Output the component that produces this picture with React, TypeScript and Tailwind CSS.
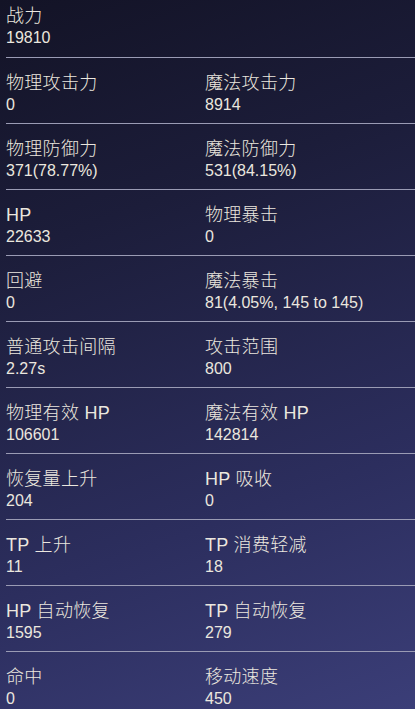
const stats: [string, string][][] = [
  [["物理攻击力", "0"], ["魔法攻击力", "8914"]],
  [["物理防御力", "371(78.77%)"], ["魔法防御力", "531(84.15%)"]],
  [["HP", "22633"], ["物理暴击", "0"]],
  [["回避", "0"], ["魔法暴击", "81(4.05%, 145 to 145)"]],
  [["普通攻击间隔", "2.27s"], ["攻击范围", "800"]],
  [["物理有效 HP", "106601"], ["魔法有效 HP", "142814"]],
  [["恢复量上升", "204"], ["HP 吸收", "0"]],
  [["TP 上升", "11"], ["TP 消费轻减", "18"]],
  [["HP 自动恢复", "1595"], ["TP 自动恢复", "279"]],
  [["命中", "0"], ["移动速度", "450"]],
];

function Stat({ label, value }: { label: string; value: string }) {
  return (
    <div>
      <div className="text-[18px] leading-[24px] font-light tracking-[0.3px]">{label}</div>
      <div className="text-[16px] leading-[20px]">{value}</div>
    </div>
  );
}

export default function App() {
  return (
    <div
      className="w-[415px] h-[709px] overflow-hidden bg-[linear-gradient(160deg,#131326_0%,#1c1d3a_30%,#2c2e5e_70%,#3b3e78_100%)] pl-[6px] text-[#ebe7df]"
      style={{ fontFamily: '"Liberation Sans", "Noto Sans CJK SC", sans-serif' }}
    >
      <div className="pt-[4px] pb-[9px] border-b border-[#9a9bb4]">
        <Stat label="战力" value="19810" />
      </div>
      {stats.map((row, i) => (
        <div key={i} className="grid grid-cols-[199px_1fr] pt-[13px] pb-[8px] border-b border-[#9a9bb4]">
          {row.map(([l, v]) => (
            <Stat key={l} label={l} value={v} />
          ))}
        </div>
      ))}
    </div>
  );
}
